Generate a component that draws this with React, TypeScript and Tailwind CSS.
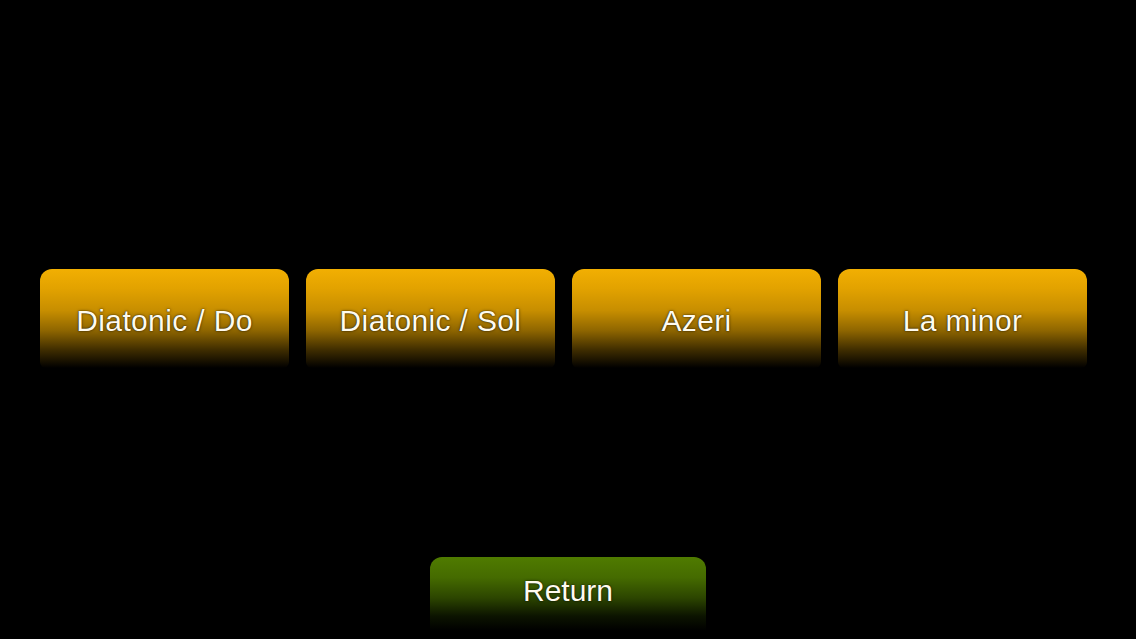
const scales = ["Diatonic / Do", "Diatonic / Sol", "Azeri", "La minor"];

const labelFont = {
  fontFamily: '"Liberation Sans", Arial, sans-serif',
};

export default function App() {
  return (
    <div
      className="w-[1136px] h-[639px] bg-black overflow-hidden flex flex-col"
      style={labelFont}
    >
      {/* scale choices */}
      <div className="pt-[269px] pl-[40px] flex gap-[17px]">
        {scales.map((s) => (
          <button
            key={s}
            type="button"
            className="w-[249px] h-[99px] rounded-t-[12px] rounded-b-[6px] pt-[4px] flex items-center justify-center
                       bg-[linear-gradient(180deg,#f2af02_0%,#e2a200_20%,#c78e00_42%,#8f6600_62%,#3e2c00_82%,#000000_100%)]
                       text-[#fffbee] text-[30px] tracking-[0.012em] [text-shadow:0_0_1px_rgba(0,0,0,0.9),0_0_3px_rgba(0,0,0,0.5)]"
          >
            {s}
          </button>
        ))}
      </div>

      {/* back */}
      <div className="mt-[189px] flex justify-center">
        <button
          type="button"
          className="w-[276px] h-[82px] rounded-t-[12px] pb-[16px] flex items-center justify-center
                     bg-[linear-gradient(180deg,#4f7b00_0%,#456b00_25%,#2c4500_50%,#0c1400_72%,#000000_90%)]
                     text-[#fffbee] text-[30px] [text-shadow:0_0_1px_rgba(0,0,0,0.9),0_0_3px_rgba(0,0,0,0.5)]"
        >
          Return
        </button>
      </div>
    </div>
  );
}
